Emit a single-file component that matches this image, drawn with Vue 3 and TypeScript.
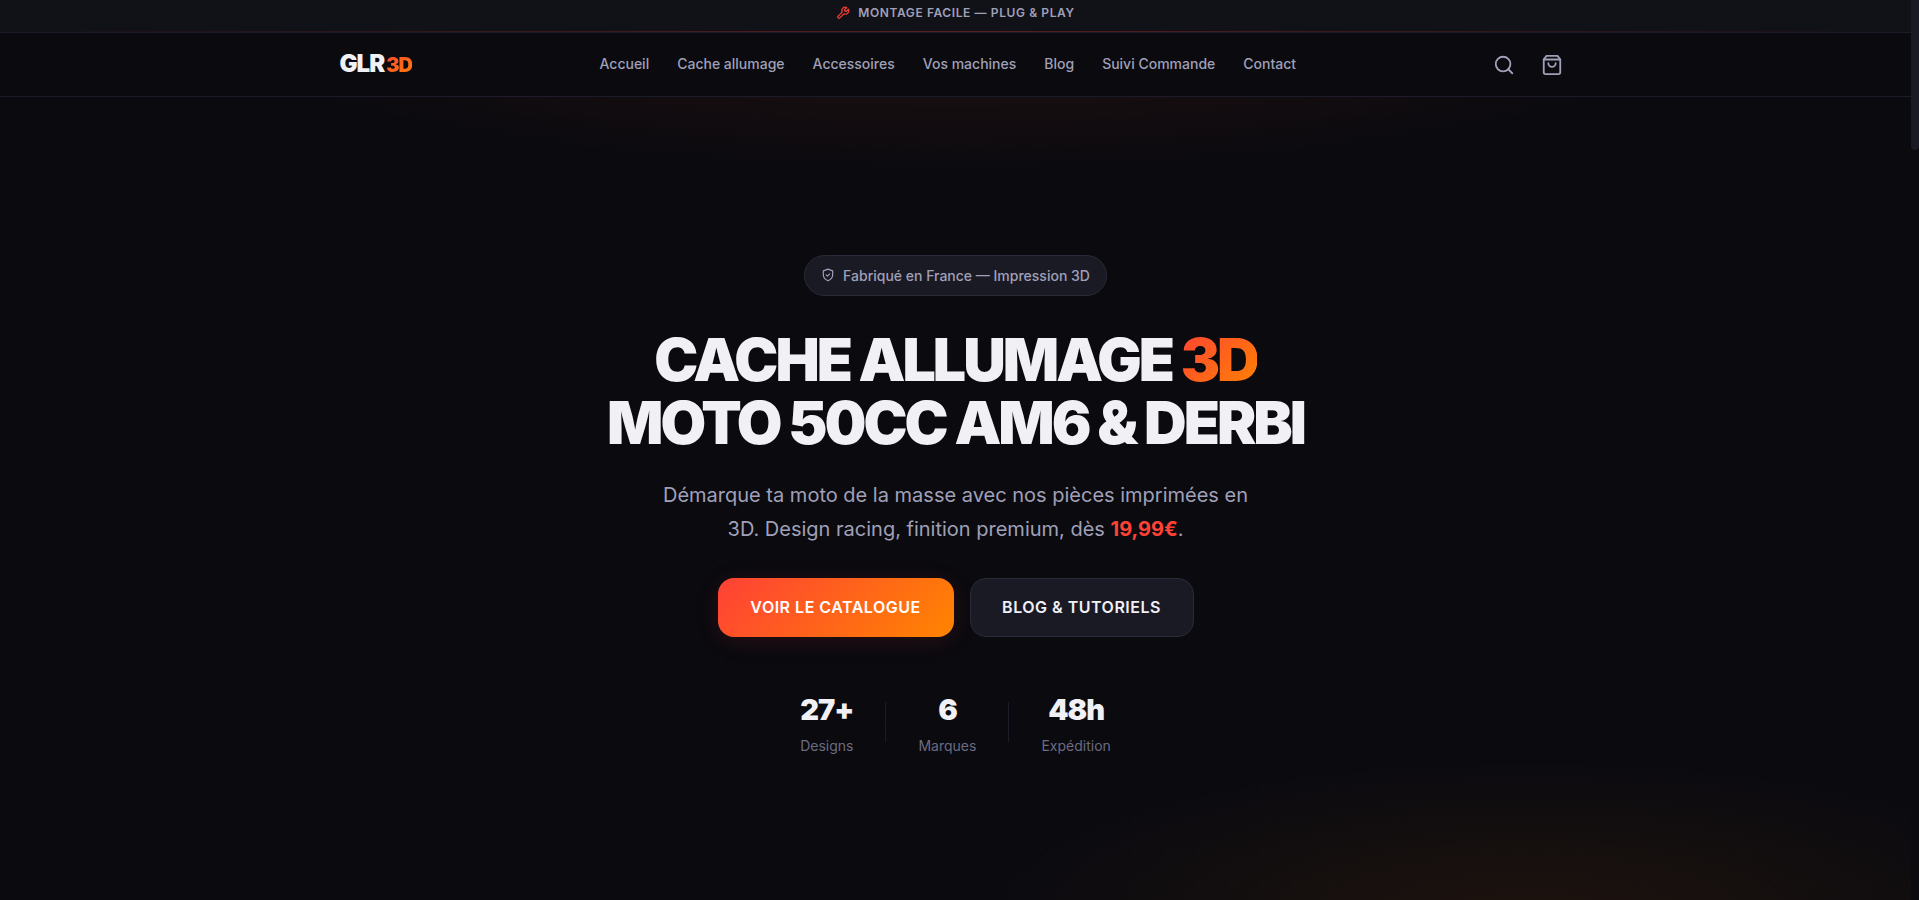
<script setup lang="ts">
interface Stat {
  value: string
  label: string
}

const links: string[] = [
  'Accueil',
  'Cache allumage',
  'Accessoires',
  'Vos machines',
  'Blog',
  'Suivi Commande',
  'Contact',
]

const stats: Stat[] = [
  { value: '27+', label: 'Designs' },
  { value: '6', label: 'Marques' },
  { value: '48h', label: 'Expédition' },
]
</script>

<template>
  <div class="page">
    <div class="topbar">
      <svg class="wrench" viewBox="0 0 24 24" aria-hidden="true">
        <path d="M14.7 6.3a1 1 0 0 0 0 1.4l1.6 1.6a1 1 0 0 0 1.4 0l3.77-3.77a6 6 0 0 1-7.94 7.94l-6.91 6.91a2.12 2.12 0 0 1-3-3l6.91-6.91a6 6 0 0 1 7.94-7.94l-3.76 3.76z" />
      </svg>
      <span>MONTAGE FACILE — PLUG &amp; PLAY</span>
    </div>

    <header class="header">
      <div class="header-inner">
        <a class="logo" href="#">GLR<span class="logo-accent">3D</span></a>
        <nav class="nav">
          <a v-for="link in links" :key="link" href="#">{{ link }}</a>
        </nav>
        <div class="actions">
          <button type="button" aria-label="Rechercher">
            <svg viewBox="0 0 24 24" aria-hidden="true">
              <circle cx="11" cy="11" r="8" />
              <path d="m21 21-4.35-4.35" />
            </svg>
          </button>
          <button type="button" aria-label="Panier">
            <svg viewBox="0 0 24 24" aria-hidden="true">
              <path d="M6 2 3 6v14a2 2 0 0 0 2 2h14a2 2 0 0 0 2-2V6l-3-4z" />
              <path d="M3 6h18" />
              <path d="M16 10a4 4 0 0 1-8 0" />
            </svg>
          </button>
        </div>
      </div>
    </header>

    <main class="hero">
      <div class="badge">
        <svg viewBox="0 0 24 24" aria-hidden="true">
          <path d="M12 22s8-4 8-10V5l-8-3-8 3v7c0 6 8 10 8 10z" />
          <path d="m9 12 2 2 4-4" />
        </svg>
        <span>Fabriqué en France — Impression 3D</span>
      </div>

      <h1>CACHE ALLUMAGE <span class="accent">3D</span><br />MOTO 50CC AM6 &amp; DERBI</h1>

      <p class="lead">
        Démarque ta moto de la masse avec nos pièces imprimées en 3D. Design racing, finition premium, dès
        <strong>19,99€</strong>.
      </p>

      <div class="cta">
        <a class="btn btn-primary" href="#">VOIR LE CATALOGUE</a>
        <a class="btn btn-secondary" href="#">BLOG &amp; TUTORIELS</a>
      </div>

      <div class="stats">
        <div v-for="stat in stats" :key="stat.label" class="stat">
          <span class="stat-value">{{ stat.value }}</span>
          <span class="stat-label">{{ stat.label }}</span>
        </div>
      </div>
    </main>

    <div class="scroll-thumb" aria-hidden="true"></div>
  </div>
</template>

<style>
body {
  margin: 0;
  background: #0a0a0f;
}
</style>

<style scoped>
.page {
  --text: #f0f0f5;
  --muted: #a0a0b8;
  --line: #1c1c28;
  --surface: #1a1a24;
  --fire: linear-gradient(135deg, #ff4136 0%, #ff8500 100%);
  --display: Inter, "Liberation Sans", sans-serif;
  position: relative;
  box-sizing: border-box;
  height: 100vh;
  overflow: hidden;
  padding-right: 8px;
  background: #0a0a0f;
  color: var(--text);
  font-family: Inter, "Liberation Sans", sans-serif;
  font-size: 16px;
  line-height: 1.6;
}

a {
  color: inherit;
  text-decoration: none;
}

svg {
  fill: none;
  stroke: currentColor;
  stroke-width: 2;
  stroke-linecap: round;
  stroke-linejoin: round;
}

.topbar {
  display: flex;
  align-items: center;
  justify-content: center;
  gap: 8px;
  box-sizing: border-box;
  height: 33px;
  padding-bottom: 7px;
  background: linear-gradient(90deg, transparent, #ff41364d, transparent) bottom / 100% 1px no-repeat, #111118;
  border-bottom: 1px solid var(--line);
  color: var(--muted);
  font-size: 12px;
  font-weight: 600;
  letter-spacing: 0.6px;
}

.wrench {
  width: 14px;
  height: 14px;
  color: #ff4136;
}

.header {
  border-bottom: 1px solid var(--line);
}

.header-inner {
  display: flex;
  align-items: center;
  justify-content: space-between;
  box-sizing: border-box;
  max-width: 1280px;
  height: 63px;
  margin: 0 auto;
  padding: 0 24px;
}

.logo {
  display: flex;
  align-items: baseline;
  gap: 2px;
  font-family: var(--display);
  font-size: 24px;
  font-weight: 900;
  letter-spacing: -1px;
}

.logo-accent {
  background: var(--fire);
  background-clip: text;
  color: transparent;
  font-size: 20px;
}

.nav {
  display: flex;
  gap: 28px;
  color: var(--muted);
  font-size: 14px;
  font-weight: 500;
}

.actions {
  display: flex;
  gap: 8px;
}

.actions button {
  display: grid;
  place-items: center;
  width: 40px;
  height: 40px;
  padding: 0;
  border: 0;
  background: none;
  color: var(--muted);
}

.actions svg {
  width: 22px;
  height: 22px;
}

.hero {
  display: flex;
  flex-direction: column;
  align-items: center;
  justify-content: center;
  box-sizing: border-box;
  min-height: calc(100vh - 83px);
  padding-top: 2px;
  text-align: center;
  background:
    radial-gradient(circle at center, #ffffff05 1px, transparent 1px) 0 0 / 32px 32px,
    radial-gradient(ellipse 80% 50% at 50% -20%, #ff512626, transparent 60%),
    radial-gradient(ellipse 60% 40% at 80% 100%, #ff7a0014, transparent 50%);
}

.badge {
  display: flex;
  align-items: center;
  gap: 8px;
  padding: 8px 16px;
  border: 1px solid #2a2a38;
  border-radius: 24px;
  background: var(--surface);
  color: var(--muted);
  font-size: 14px;
  font-weight: 500;
  line-height: 23px;
}

.badge svg {
  width: 14px;
  height: 14px;
}

h1 {
  margin: 32px 0 24px;
  font-family: var(--display);
  font-size: 59px;
  font-weight: 900;
  line-height: 63px;
  letter-spacing: -3px;
}

.accent {
  background: var(--fire);
  background-clip: text;
  color: transparent;
}

.lead {
  max-width: 600px;
  margin: 0;
  color: var(--muted);
  font-size: 20px;
  line-height: 34px;
}

.lead strong {
  color: #ff4136;
  font-weight: 700;
}

.cta {
  display: flex;
  gap: 16px;
  margin: 32px 0 48px;
}

.btn {
  box-sizing: border-box;
  min-width: 224px;
  padding: 16px 24px;
  border: 1px solid #2a2a38;
  border-radius: 16px;
  background: var(--surface);
  font-family: var(--display);
  font-size: 16px;
  font-weight: 600;
  letter-spacing: 0.5px;
}

.btn-primary {
  min-width: 236px;
  padding: 17px 24px;
  border: 0;
  background: var(--fire);
  color: #ffffff;
  box-shadow: 0 4px 24px #ff41361f;
}

.stats {
  display: flex;
  align-items: center;
}

.stat {
  display: flex;
  flex-direction: column;
  padding: 0 32px;
}

.stat + .stat {
  border-left: 1px solid transparent;
  background: linear-gradient(var(--line), var(--line)) left center / 1px 40px no-repeat border-box;
}

.stat-value {
  font-family: var(--display);
  font-size: 29px;
  font-weight: 900;
  line-height: 49px;
  letter-spacing: -1px;
}

.stat-label {
  color: #6b6b82;
  font-size: 14px;
  line-height: 24px;
}

.scroll-thumb {
  position: absolute;
  top: 0;
  right: 0;
  width: 8px;
  height: 150px;
  border-radius: 0 0 4px 4px;
  background: var(--surface);
}
</style>
